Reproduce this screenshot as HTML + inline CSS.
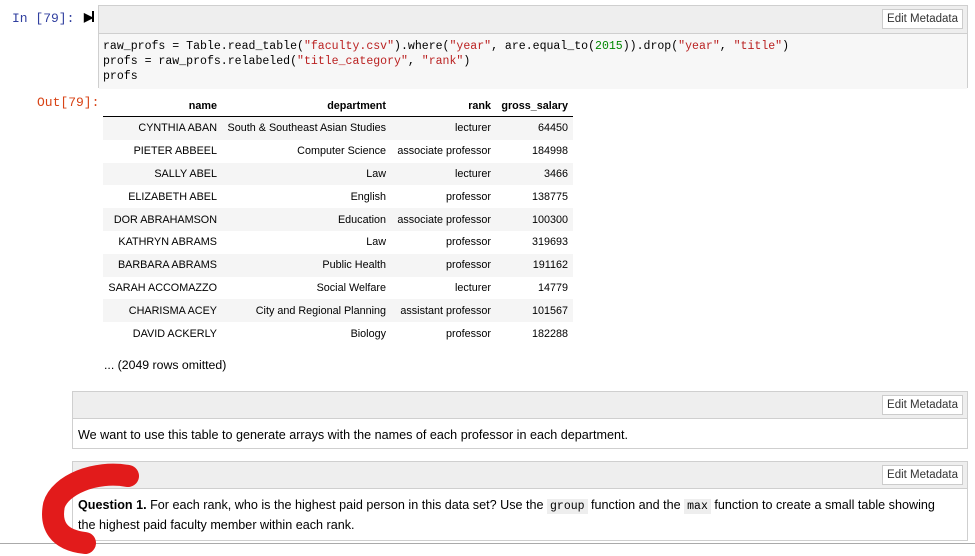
<!DOCTYPE html><html><head><style>
body{margin:0;width:975px;height:556px;background:#fff;font-family:"Liberation Sans",sans-serif;position:relative;overflow:hidden}
.abs{position:absolute}
.prompt{font-family:"Liberation Mono",monospace;font-size:13px}
.cell{position:absolute;border:1px solid #cfcfcf;box-sizing:border-box}
.hdr{background:#eee;border-bottom:1px solid #cfcfcf;position:relative}
.btn{position:absolute;right:4px;top:3px;background:#fff;border:1px solid #ccc;font-size:11.5px;padding:3px 4px;color:#333}
.code{background:#f7f7f7;font-family:"Liberation Mono",monospace;font-size:11.55px;line-height:15px;padding:5px 4px;white-space:pre;color:#000}
.s{color:#ba2121}.n{color:#080}
table{border-collapse:collapse;font-size:10.8px;position:absolute;left:103px;top:96px;table-layout:fixed;width:470px;white-space:nowrap}
th{font-weight:bold;text-align:right;height:20px;padding:0 5px;border-bottom:1px solid #000}
td{text-align:right;height:22.8px;padding:0 5px;color:#000}
tr.g td{background:#f5f5f5}
.md{font-size:12.6px;padding:7px 5px;line-height:18px;color:#000}
code{font-family:"Liberation Mono",monospace;background:#eee;padding:1px 3px;font-size:11.5px}
</style></head><body>
<div class="abs prompt" style="left:12px;top:11px;color:#303f9f">In [79]:</div>
<div class="abs" style="left:84px;top:10px;font-size:12px;font-weight:bold">&#9654;</div>
<div class="abs" style="left:92px;top:11px;width:2px;height:11px;background:#000"></div>
<div class="cell" style="left:98px;top:5px;width:870px;height:83px">
<div class="hdr" style="height:27px"><span class="btn">Edit Metadata</span></div>
<div class="code" style="height:45px">raw_profs = Table.read_table(<span class="s">"faculty.csv"</span>).where(<span class="s">"year"</span>, are.equal_to(<span class="n">2015</span>)).drop(<span class="s">"year"</span>, <span class="s">"title"</span>)
profs = raw_profs.relabeled(<span class="s">"title_category"</span>, <span class="s">"rank"</span>)
profs</div></div>
<div class="abs prompt" style="left:37px;top:95px;color:#d84315">Out[79]:</div>
<table>
<colgroup><col style="width:119px"><col style="width:169px"><col style="width:105px"><col style="width:77px"></colgroup>
<tr><th>name</th><th>department</th><th>rank</th><th>gross_salary</th></tr>
<tr class="g"><td>CYNTHIA ABAN</td><td>South &amp; Southeast Asian Studies</td><td>lecturer</td><td>64450</td></tr>
<tr><td>PIETER ABBEEL</td><td>Computer Science</td><td>associate professor</td><td>184998</td></tr>
<tr class="g"><td>SALLY ABEL</td><td>Law</td><td>lecturer</td><td>3466</td></tr>
<tr><td>ELIZABETH ABEL</td><td>English</td><td>professor</td><td>138775</td></tr>
<tr class="g"><td>DOR ABRAHAMSON</td><td>Education</td><td>associate professor</td><td>100300</td></tr>
<tr><td>KATHRYN ABRAMS</td><td>Law</td><td>professor</td><td>319693</td></tr>
<tr class="g"><td>BARBARA ABRAMS</td><td>Public Health</td><td>professor</td><td>191162</td></tr>
<tr><td>SARAH ACCOMAZZO</td><td>Social Welfare</td><td>lecturer</td><td>14779</td></tr>
<tr class="g"><td>CHARISMA ACEY</td><td>City and Regional Planning</td><td>assistant professor</td><td>101567</td></tr>
<tr><td>DAVID ACKERLY</td><td>Biology</td><td>professor</td><td>182288</td></tr>
</table>
<div class="abs" style="left:104px;top:358px;font-size:12.3px">... (2049 rows omitted)</div>
<div class="cell" style="left:72px;top:391px;width:896px;height:58px">
<div class="hdr" style="height:26px"><span class="btn">Edit Metadata</span></div>
<div class="md">We want to use this table to generate arrays with the names of each professor in each department.</div></div>
<div class="cell" style="left:72px;top:461px;width:896px;height:80px">
<div class="hdr" style="height:26px"><span class="btn">Edit Metadata</span></div>
<div class="md" style="padding-right:20px"><b>Question 1.</b> For each rank, who is the highest paid person in this data set? Use the <code>group</code> function and the <code>max</code> function to create a small table showing the highest paid faculty member within each rank.</div></div>
<div class="abs" style="left:0;top:543px;width:975px;height:1px;background:#aaa"></div>
<svg class="abs" style="left:0;top:0" width="975" height="556"><path d="M128,476 C95,470 60,485 54,505 C50,525 58,540 85,543" fill="none" stroke="#e21b1b" stroke-width="22" stroke-linecap="round"/></svg>
</body></html>
